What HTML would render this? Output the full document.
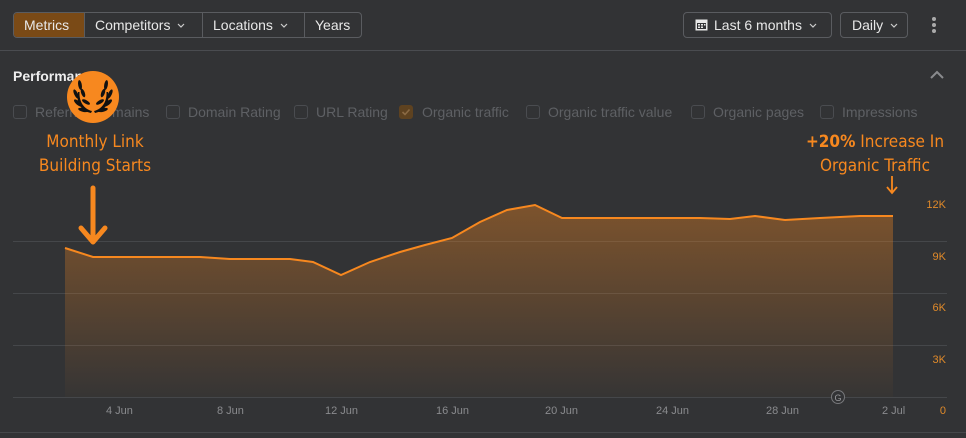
<!DOCTYPE html>
<html><head><meta charset="utf-8"><style>
*{margin:0;padding:0;box-sizing:border-box}
body{width:966px;height:438px;background:#323335;font-family:"Liberation Sans",sans-serif;position:relative;overflow:hidden;color:#e6e6e6}
.btn{position:absolute;top:12px;height:26px;border:1px solid #5a5c60;font-size:14px;line-height:24px;color:#e8e8e8}
.seg{position:absolute;top:0;height:24px;padding:0 10px;border-left:1px solid #5a5c60;white-space:nowrap}
.chev{display:inline-block;width:8px;height:5px;margin-left:7px;vertical-align:2px}
.lbl{position:absolute;font-size:14px;color:#5e6064;top:104px;white-space:nowrap}
.cb{position:absolute;top:105px;width:14px;height:14px;border:1px solid #4a4c50;border-radius:3px}
.ax{position:absolute;font-size:11px;color:#8a8b8e;top:405px}
.ay{position:absolute;font-size:11px;color:#e08a2a;right:20px}
.ann{position:absolute;color:#f7881f;font-size:17px;text-align:center;line-height:24px;font-family:"DejaVu Sans Condensed","Liberation Sans",sans-serif}
</style></head><body>
<div class="btn" style="left:13px;width:349px;border-radius:4px;overflow:hidden">
 <div class="seg" style="left:0;border-left:none;background:#7a4a16;width:70px">Metrics</div>
 <div class="seg" style="left:70px;width:118px">Competitors<svg class="chev" viewBox="0 0 8 5"><path d="M1 1 L4 4 L7 1" stroke="#ccc" stroke-width="1.2" fill="none"/></svg></div>
 <div class="seg" style="left:188px;width:102px">Locations<svg class="chev" viewBox="0 0 8 5"><path d="M1 1 L4 4 L7 1" stroke="#ccc" stroke-width="1.2" fill="none"/></svg></div>
 <div class="seg" style="left:290px;width:58px">Years</div>
</div>
<div class="btn" style="left:683px;width:149px;border-radius:4px;padding-left:11px">
 <svg width="13" height="13" viewBox="0 0 13 13" style="vertical-align:-1px;margin-right:6px"><rect x="0.5" y="1.5" width="12" height="11" fill="#e8e8e8"/><rect x="2" y="5" width="9" height="6" fill="#323335"/><rect x="3" y="6" width="2" height="1.5" fill="#e8e8e8"/><rect x="6" y="6" width="2" height="1.5" fill="#e8e8e8"/><rect x="9" y="6" width="1.5" height="1.5" fill="#e8e8e8"/><rect x="3" y="8.5" width="2" height="1.5" fill="#e8e8e8"/><rect x="6" y="8.5" width="2" height="1.5" fill="#e8e8e8"/></svg>Last 6 months<svg class="chev" viewBox="0 0 8 5"><path d="M1 1 L4 4 L7 1" stroke="#ccc" stroke-width="1.2" fill="none"/></svg></div>
<div class="btn" style="left:840px;width:68px;border-radius:4px;padding-left:11px">Daily<svg class="chev" viewBox="0 0 8 5"><path d="M1 1 L4 4 L7 1" stroke="#ccc" stroke-width="1.2" fill="none"/></svg></div>
<svg style="position:absolute;left:930px;top:16px" width="8" height="18"><circle cx="4" cy="3" r="2" fill="#aaa"/><circle cx="4" cy="9" r="2" fill="#aaa"/><circle cx="4" cy="15" r="2" fill="#aaa"/></svg>
<div style="position:absolute;left:0;top:50px;width:966px;height:1px;background:#4a4c50"></div>
<div style="position:absolute;left:13px;top:68px;font-size:14px;font-weight:bold;color:#eee">Performance</div>
<svg style="position:absolute;left:929px;top:70px" width="16" height="10"><path d="M2 8 L8 2 L14 8" stroke="#8a8b8e" stroke-width="2" fill="none"/></svg>
<div class="cb" style="left:13px"></div><div class="lbl" style="left:35px">Referring domains</div>
<div class="cb" style="left:166px"></div><div class="lbl" style="left:188px">Domain Rating</div>
<div class="cb" style="left:294px"></div><div class="lbl" style="left:316px">URL Rating</div>
<div class="cb" style="left:399px;background:#5e4220;border-color:#5e4220"><svg width="12" height="12" style="position:absolute;left:0;top:0"><path d="M2.5 6 L5 8.5 L9.5 3.5" stroke="#8a6a44" stroke-width="1.6" fill="none"/></svg></div><div class="lbl" style="left:422px">Organic traffic</div>
<div class="cb" style="left:526px"></div><div class="lbl" style="left:548px">Organic traffic value</div>
<div class="cb" style="left:691px"></div><div class="lbl" style="left:713px">Organic pages</div>
<div class="cb" style="left:820px"></div><div class="lbl" style="left:842px">Impressions</div>
<svg style="position:absolute;left:67px;top:71px" width="52" height="52" viewBox="0 0 52 52">
<circle cx="26" cy="26" r="26" fill="#f7881f"/>
<g fill="#111">
<path d="M24 42 C14 40 9 32 11 21 L12.5 21 C12 31 17 38 25 40 Z"/>
<path d="M28 42 C38 40 43 32 41 21 L39.5 21 C40 31 35 38 27 40 Z"/>
<ellipse cx="13" cy="14" rx="1.8" ry="5" transform="rotate(-10 13 14)"/>
<ellipse cx="39" cy="14" rx="1.8" ry="5" transform="rotate(10 39 14)"/>
<ellipse cx="9" cy="23" rx="1.8" ry="5" transform="rotate(-25 9 23)"/>
<ellipse cx="43" cy="23" rx="1.8" ry="5" transform="rotate(25 43 23)"/>
<ellipse cx="16" cy="22" rx="1.8" ry="4.5" transform="rotate(-20 16 22)"/>
<ellipse cx="36" cy="22" rx="1.8" ry="4.5" transform="rotate(20 36 22)"/>
<ellipse cx="11" cy="32" rx="5" ry="2" transform="rotate(40 11 32)"/>
<ellipse cx="41" cy="32" rx="5" ry="2" transform="rotate(-40 41 32)"/>
<ellipse cx="19" cy="31" rx="4.5" ry="1.8" transform="rotate(30 19 31)"/>
<ellipse cx="33" cy="31" rx="4.5" ry="1.8" transform="rotate(-30 33 31)"/>
<ellipse cx="16" cy="39" rx="5" ry="1.8" transform="rotate(15 16 39)"/>
<ellipse cx="36" cy="39" rx="5" ry="1.8" transform="rotate(-15 36 39)"/>
</g></svg>
<div class="ann" style="left:20px;top:130px;width:150px">Monthly Link<br>Building Starts</div>
<div class="ann" style="left:790px;top:130px;width:170px"><b>+20%</b> Increase In<br>Organic Traffic</div>
<svg style="position:absolute;left:0;top:0" width="966" height="438">
<defs><linearGradient id="g" x1="0" y1="0" x2="0" y2="1"><stop offset="0" stop-color="#f7881f" stop-opacity="0.38"/><stop offset="1" stop-color="#f7881f" stop-opacity="0.02"/></linearGradient></defs>
<g stroke="#45474a" stroke-width="1"><line x1="13" y1="241.5" x2="947" y2="241.5"/><line x1="13" y1="293.5" x2="947" y2="293.5"/><line x1="13" y1="345.5" x2="947" y2="345.5"/><line x1="13" y1="397.5" x2="947" y2="397.5"/><line x1="0" y1="432.5" x2="966" y2="432.5"/></g>
<path d="M65 248 L93 257 L200 257 L230 259 L290 259 L313 262 L341 275 L370 262 L400 252 L425 245 L452 238 L480 222 L507 210 L535 205 L562 218 L700 218 L730 219 L755 216 L785 220 L820 218 L860 216 L893 216 L893 397 L65 397 Z" fill="url(#g)"/>
<path d="M65 248 L93 257 L200 257 L230 259 L290 259 L313 262 L341 275 L370 262 L400 252 L425 245 L452 238 L480 222 L507 210 L535 205 L562 218 L700 218 L730 219 L755 216 L785 220 L820 218 L860 216 L893 216" fill="none" stroke="#f7881f" stroke-width="2"/>
<path d="M93 188 L93 240 M81 228 L93 242 L105 228" stroke="#f7881f" stroke-width="5" fill="none" stroke-linecap="round" stroke-linejoin="round"/>
<path d="M892 176 L892 192 M887 187 L892 193 L897 187" stroke="#f7881f" stroke-width="1.8" fill="none"/>
<circle cx="838" cy="397" r="6.5" fill="#323335" stroke="#77787b" stroke-width="1"/>
<text x="838" y="401" font-size="9" fill="#99999c" text-anchor="middle" font-family="Liberation Sans">G</text>
</svg>
<div class="ax" style="left:106px">4 Jun</div><div class="ax" style="left:217px">8 Jun</div><div class="ax" style="left:325px">12 Jun</div><div class="ax" style="left:436px">16 Jun</div><div class="ax" style="left:545px">20 Jun</div><div class="ax" style="left:656px">24 Jun</div><div class="ax" style="left:766px">28 Jun</div><div class="ax" style="left:882px">2 Jul</div>
<div class="ay" style="top:199px">12K</div><div class="ay" style="top:251px">9K</div><div class="ay" style="top:302px">6K</div><div class="ay" style="top:354px">3K</div><div class="ay" style="top:405px">0</div>
</body></html>
